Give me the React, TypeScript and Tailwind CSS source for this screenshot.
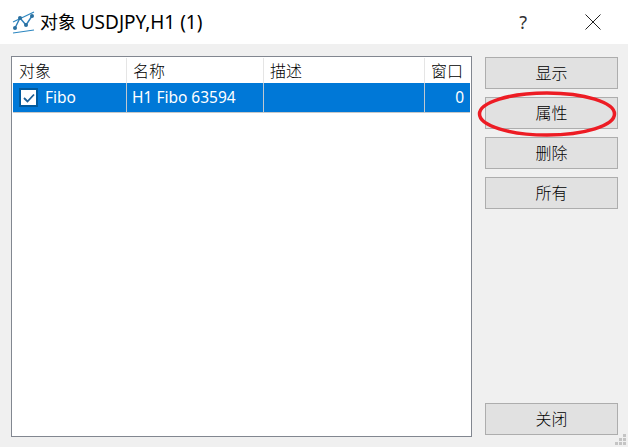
const font = "font-['Noto_Sans','Noto_Sans_CJK_SC',sans-serif]";

function DialogButton({ label }: { label: string }) {
  return (
    <button className="h-[32px] w-[133px] border border-[#adadad] bg-[#e1e1e1] text-[16px] font-light leading-none text-black">
      {label}
    </button>
  );
}

function ChartIcon() {
  return (
    <svg width="24" height="24" viewBox="0 0 24 24" fill="none" className="shrink-0">
      <path d="M1 12L22 2" stroke="#2b86c0" strokeWidth="1.2" />
      <path d="M1 23L22 20" stroke="#2b86c0" strokeWidth="1.2" />
      <path d="M3 18L8 8L14 15L20 6" stroke="#2f7fb8" strokeWidth="1.4" />
      <circle cx="3" cy="18" r="2" fill="#2a6f9f" />
      <circle cx="8" cy="8" r="2" fill="#2a6f9f" />
      <circle cx="14" cy="15" r="2" fill="#2a6f9f" />
      <circle cx="20" cy="6" r="2" fill="#2a6f9f" />
    </svg>
  );
}

export default function App() {
  return (
    <div className={`${font} relative flex h-[447px] w-[628px] flex-col overflow-hidden bg-[#f0f0f0]`}>
      {/* Title bar */}
      <div className="flex h-[44px] items-center bg-white pl-[12px]">
        <ChartIcon />
        <span className="ml-[4px] text-[18px] leading-none text-black">
          对象 <span className="text-[19px]">USDJPY,H1 (1)</span>
        </span>
        <span className="ml-auto mr-[58px] text-[18px] leading-none text-[#333]">?</span>
        <svg width="16" height="16" viewBox="0 0 16 16" className="mr-[27px]">
          <path d="M0.5 0.5L15.5 15.5M15.5 0.5L0.5 15.5" stroke="#222" strokeWidth="1" />
        </svg>
      </div>

      <div className="flex flex-1 pl-[11px] pt-[12px]">
        {/* Object list */}
        <div className="h-[381px] w-[461px] border border-[#828790] bg-white p-px text-[16px] text-black">
          <div className="grid h-[25px] grid-cols-[114px_137px_161px_45px]">
            {["对象", "名称", "描述", "窗口"].map((h) => (
              <div key={h} className="flex items-center border-r border-[#e5e5e5] pl-[6px] font-light leading-none last:border-r-0">
                {h}
              </div>
            ))}
          </div>
          <div className="grid h-[30px] grid-cols-[114px_137px_161px_45px] border-b border-[#c8c8c8] bg-[#0078d7] text-[15.5px] text-white">
            <div className="flex items-center border-r border-[#c0c8d0] pl-[6px]">
              <span className="flex h-[19px] w-[19px] items-center justify-center border-2 border-[#005a9e] bg-white">
                <svg width="12" height="10" viewBox="0 0 12 10" fill="none">
                  <path d="M1 5L4.5 8.5L11 1.5" stroke="#1c5f96" strokeWidth="1.8" />
                </svg>
              </span>
              <span className="ml-[7px]">Fibo</span>
            </div>
            <div className="flex items-center border-r border-[#c0c8d0] pl-[5px]">H1 Fibo 63594</div>
            <div className="border-r border-[#c0c8d0]" />
            <div className="flex items-center justify-end pr-[6px]">0</div>
          </div>
        </div>

        {/* Buttons */}
        <div className="ml-[13px] flex h-[379px] flex-col gap-[8px] pt-px">
          <DialogButton label="显示" />
          <DialogButton label="属性" />
          <DialogButton label="删除" />
          <DialogButton label="所有" />
          <div className="mt-auto">
            <DialogButton label="关闭" />
          </div>
        </div>
      </div>

      {/* Red annotation ellipse */}
      <svg width="146" height="50" viewBox="0 0 146 50" fill="none" className="absolute left-[474px] top-[89px]">
        <ellipse cx="73" cy="25" rx="67.5" ry="21" stroke="#ed1c24" strokeWidth="3.5" />
      </svg>

      {/* Resize grip */}
      <svg width="12" height="12" viewBox="0 0 12 12" className="absolute bottom-[1px] right-[1px]">
        <path d="M8 0h3v3H8zM4 4h3v3H4zM8 4h3v3H8zM0 8h3v3H0zM4 8h3v3H4zM8 8h3v3H8z" fill="#c4c4c4" />
      </svg>
    </div>
  );
}
